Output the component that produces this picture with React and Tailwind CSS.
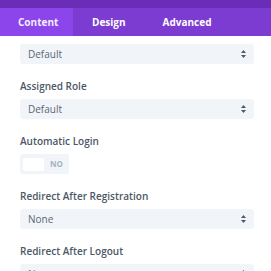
import React from "react";

function Arrows() {
  return (
    <svg width="5" height="8" viewBox="0 0 5 8" className="shrink-0">
      <path d="M2.5 0 L5 3 L0 3 Z" fill="#4c5866" />
      <path d="M2.5 8 L5 5 L0 5 Z" fill="#4c5866" />
    </svg>
  );
}

function Select({ value }) {
  return (
    <div className="h-[20px] bg-[#f1f5f9] rounded-[3px] flex items-center justify-between pl-[8px] pr-[8px] text-[10px] text-[#5b6675]">
      <span>{value}</span>
      <Arrows />
    </div>
  );
}

function Label({ children }) {
  return (
    <div className="text-[10px] leading-[15px] font-semibold text-[#4c5866] mb-[5px]">
      {children}
    </div>
  );
}

export default function App() {
  return (
    <div
      className="w-[271px] h-[271px] overflow-hidden bg-white"
      style={{ fontFamily: '"Open Sans", sans-serif' }}
    >
      <div className="h-[8px] bg-[#6a2db8]" />
      <div className="h-[28px] bg-[#7c3bd1] flex text-[10px] font-bold text-white">
        <div className="bg-[#8c45ea] w-[73px] flex items-center pl-[18px] text-[#f4ecff]">Content</div>
        <div className="flex items-center pl-[19px] pr-[18px]">Design</div>
        <div className="flex items-center pl-[19px]">Advanced</div>
      </div>
      <div className="ml-[20px] mr-[17px] pt-[8px] flex flex-col gap-[15px]">
        <Select value="Default" />
        <div>
          <Label>Assigned Role</Label>
          <Select value="Default" />
        </div>
        <div>
          <Label>Automatic Login</Label>
          <div className="w-[49px] h-[20px] bg-[#f1f5f9] rounded-[3px] flex items-center pl-[3px]">
            <div className="w-[21px] h-[13px] bg-white rounded-[2px]" />
            <span className="ml-[6px] text-[8px] font-bold text-[#a6b2c1]">NO</span>
          </div>
        </div>
        <div>
          <Label>Redirect After Registration</Label>
          <Select value="None" />
        </div>
        <div>
          <Label>Redirect After Logout</Label>
          <Select value="None" />
        </div>
      </div>
    </div>
  );
}
